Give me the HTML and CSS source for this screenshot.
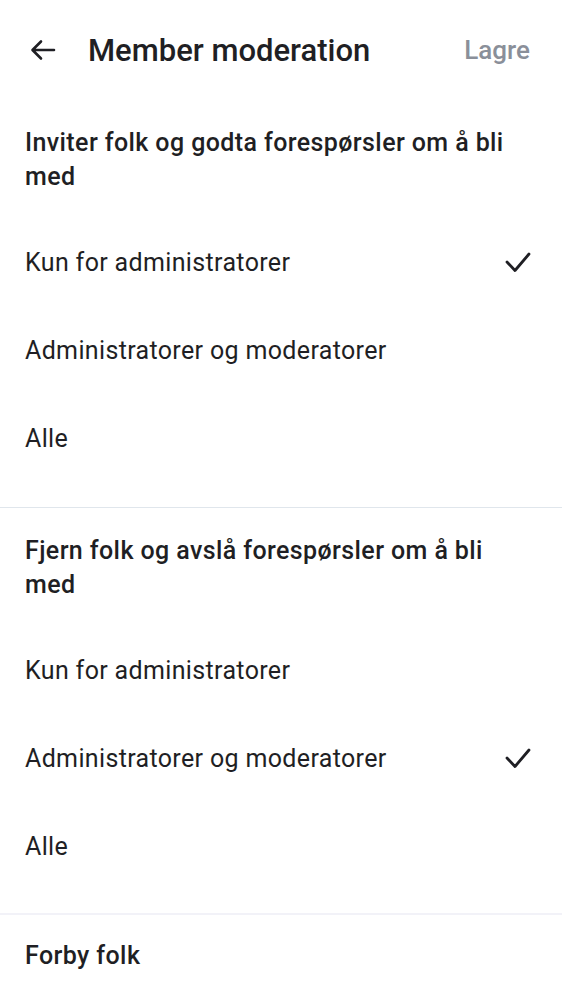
FILE: index.html
```html
<!DOCTYPE html>
<html lang="no">
<head>
<meta charset="utf-8">
<link rel="stylesheet" href="styles.css">
</head>
<body>
<div class="screen">
  <header class="topbar">
    <button class="back" aria-label="Tilbake">
      <svg width="28" height="28" viewBox="0 0 28 28" fill="none" stroke="#1f1f24" stroke-width="2.6" stroke-linecap="round" stroke-linejoin="round"><path d="M25 14H4M12 5.5L3.5 14L12 22.5"/></svg>
    </button>
    <h1 class="title">Member moderation</h1>
    <span class="save">Lagre</span>
  </header>

  <section class="group">
    <h2 class="group-title">Inviter folk og godta forespørsler om å bli med</h2>
    <div class="options">
      <div class="option"><span>Kun for administratorer</span>
        <svg class="check" width="26" height="22" viewBox="0 0 26 22" fill="none" stroke="#1f1f24" stroke-width="2.8" stroke-linecap="round" stroke-linejoin="round"><path d="M2 11L10 19.5L24 3"/></svg>
      </div>
      <div class="option"><span>Administratorer og moderatorer</span></div>
      <div class="option"><span>Alle</span></div>
    </div>
  </section>

  <section class="group second">
    <h2 class="group-title">Fjern folk og avslå forespørsler om å bli med</h2>
    <div class="options">
      <div class="option"><span>Kun for administratorer</span></div>
      <div class="option"><span>Administratorer og moderatorer</span>
        <svg class="check" width="26" height="22" viewBox="0 0 26 22" fill="none" stroke="#1f1f24" stroke-width="2.8" stroke-linecap="round" stroke-linejoin="round"><path d="M2 11L10 19.5L24 3"/></svg>
      </div>
      <div class="option"><span>Alle</span></div>
    </div>
  </section>

  <section class="group last">
    <h2 class="group-title">Forby folk</h2>
  </section>
</div>
</body>
</html>
```
FILE: styles.css
```css
* { box-sizing: border-box; }
html, body { margin: 0; padding: 0; background: #ffffff; }
body {
  font-family: Roboto, "Noto Sans", sans-serif;
  color: #1f1f24;
}
.screen { width: 562px; }
.topbar {
  display: flex;
  align-items: center;
  height: 100px;
  padding: 0 32px 0 29px;
}
.back {
  display: flex;
  align-items: center;
  justify-content: center;
  width: 28px;
  height: 28px;
  padding: 0;
  border: 0;
  background: none;
}
.title {
  margin: 0 0 0 31px;
  font-size: 31px;
  font-weight: 500;
  flex: 1;
}
.save {
  font-size: 26px;
  font-weight: 500;
  color: #8a8f99;
}
.group {
  padding: 26px 0 25px;
  border-bottom: 1px solid #e0e6ec;
}
.group.second {
  padding-top: 26px;
  padding-bottom: 23px;
  border-bottom: 2px solid #f2f2f8;
}
.group.last {
  padding-top: 24px;
  border-bottom: 0;
}
.group-title {
  margin: 0;
  padding: 0 40px 0 25px;
  font-size: 25px;
  line-height: 34px;
  font-weight: 500;
  letter-spacing: 0.4px;
}
.options { margin-top: 24px; }
.option {
  display: flex;
  align-items: center;
  justify-content: space-between;
  height: 88px;
  padding: 0 31px 0 25px;
  font-size: 25px;
  letter-spacing: 0.35px;
}
.check { display: block; }
```
